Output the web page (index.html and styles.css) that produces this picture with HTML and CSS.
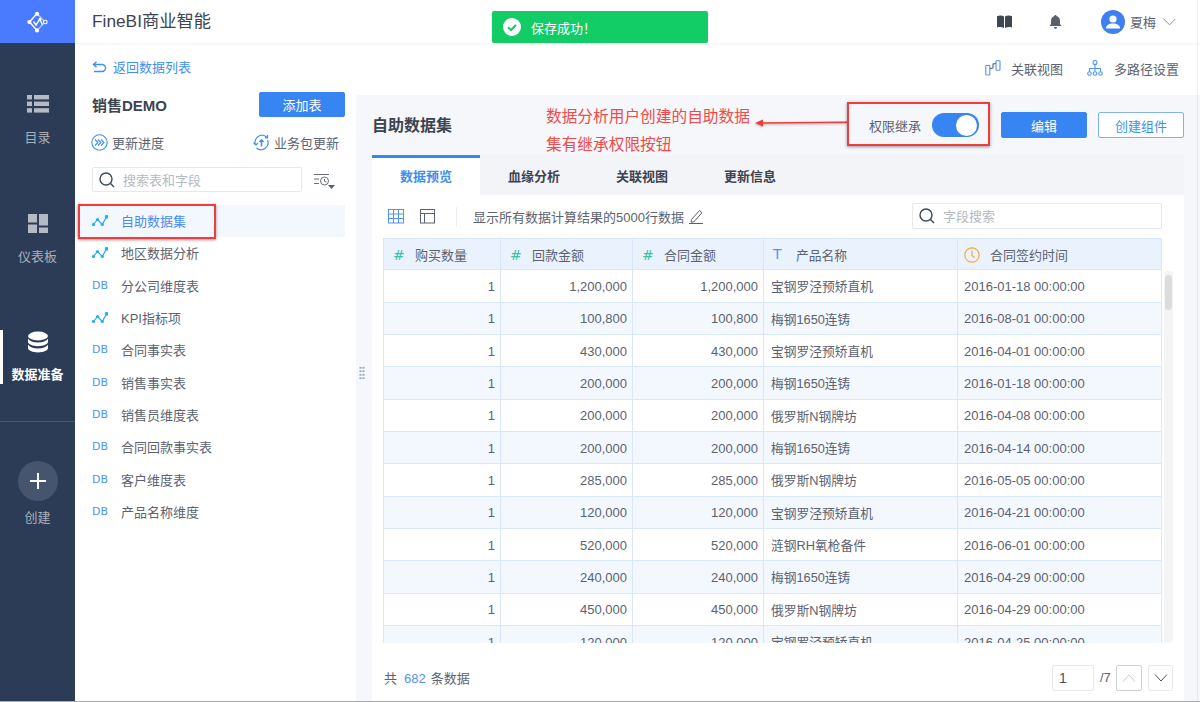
FILE: index.html
```html
<!DOCTYPE html>
<html lang="zh-CN">
<head>
<meta charset="utf-8">
<title>FineBI商业智能</title>
<link rel="stylesheet" href="styles.css">
</head>
<body>
<div class="app">
  <nav class="rail">
    <div class="rail-logo">
      <svg width="22" height="22" viewBox="0 0 22 22" fill="none" stroke="#fff" stroke-width="1.400">
        <path d="M10 2.500 2.500 11l7.500 8.500"/>
        <path d="M10 2.500l8 8.500-8 8.500" stroke-opacity=".55"/>
        <path d="M6.500 10.500 9 14l4-6 2.500 6"/>
        <circle cx="10" cy="2.800" r="2.100" fill="#fff" stroke="none"/>
        <circle cx="2.400" cy="11" r="2.100" fill="#fff" stroke="none"/>
        <circle cx="10" cy="19.400" r="2.100" fill="#fff" stroke="none"/>
        <circle cx="18.300" cy="11" r="1.800" fill="#4a7bff" stroke-width="1.100"/>
        <circle cx="13" cy="8" r="1.300" fill="#fff" stroke="none"/>
      </svg>
    </div>
    <a class="rail-item">
      <svg class="rail-icon" width="22" height="20" viewBox="0 0 22 20" fill="#b4bac4"><rect x="0" y="1" width="5" height="4.400"/><rect x="7" y="1" width="15" height="4.400"/><rect x="0" y="7.600" width="5" height="4.400"/><rect x="7" y="7.600" width="15" height="4.400"/><rect x="0" y="14.200" width="5" height="4.400"/><rect x="7" y="14.200" width="15" height="4.400"/></svg>
      <span>目录</span>
    </a>
    <a class="rail-item">
      <svg class="rail-icon" width="22" height="22" viewBox="0 0 22 22" fill="#b4bac4"><rect x="1" y="1" width="9" height="8.500"/><rect x="12" y="1" width="9" height="11.500"/><rect x="1" y="11.500" width="9" height="8.500"/><rect x="12" y="14.500" width="9" height="5.500"/></svg>
      <span>仪表板</span>
    </a>
    <a class="rail-item active">
      <svg class="rail-icon" width="22" height="22" viewBox="0 0 22 22" fill="#fff"><ellipse cx="11" cy="5" rx="10" ry="4.400"/><path d="M1 7.800c1.600 2.400 5.400 3.600 10 3.600s8.400-1.200 10-3.600v3c0 2.400-4.500 4.400-10 4.400S1 13.200 1 10.800z"/><path d="M1 13.800c1.600 2.400 5.400 3.600 10 3.600s8.400-1.200 10-3.600v3.200c0 2.400-4.500 4.400-10 4.400S1 19.400 1 17z"/></svg>
      <span>数据准备</span>
    </a>
    <div class="rail-divider"></div>
    <a class="rail-create">
      <i class="plus-circle"><svg width="16" height="16" viewBox="0 0 16 16" fill="#fff"><rect x="0" y="7" width="16" height="2"/><rect x="7" y="0" width="2" height="16"/></svg></i>
      <span>创建</span>
    </a>
  </nav>

  <div class="main">
    <header class="topbar">
      <div class="brand">FineBI商业智能</div>
      <div class="toast">
        <svg width="18" height="18" viewBox="0 0 18 18"><circle cx="9" cy="9" r="9" fill="#fff"/><path d="M5 9.200 8 12l5-5" fill="none" stroke="#12cd65" stroke-width="2"/></svg>
        <span>保存成功！</span>
      </div>
      <div class="top-tools">
        <svg class="book" width="15" height="13" viewBox="0 0 15 13" fill="#3f4650"><path d="M0 1.200C2.500 0 5.200.2 7 1.400V13C5 11.800 2.500 11.600 0 12.400zM15 1.200C12.500 0 9.800.2 8 1.400V13c2-1.200 4.500-1.400 7-.6z"/></svg>
        <svg class="bell" width="13" height="14" viewBox="0 0 13 14" fill="#5b6068"><path d="M6.500 0c.7 0 1 .5 1 1 2.300.6 3.500 2.500 3.500 5v3l1.500 2H.5L2 9V6c0-2.500 1.200-4.400 3.500-5 0-.5.300-1 1-1z"/><path d="M5 12h3c0 1-.6 1.800-1.500 1.800S5 13 5 12z"/></svg>
        <div class="avatar"><svg width="14" height="14" viewBox="0 0 14 14" fill="#fff"><circle cx="7" cy="4" r="3.600"/><path d="M0 13.500c0-3.500 3-5 7-5s7 1.500 7 5z"/></svg></div>
        <span class="user">夏梅</span>
        <svg class="chev" width="13" height="8" viewBox="0 0 13 8" fill="none" stroke="#8a8f98"><path d="M.5.800 6.500 6.800 12.500.8"/></svg>
      </div>
    </header>

    <div class="body">
      <aside class="panel">
        <a class="back">
          <svg width="15" height="12" viewBox="0 0 15 12" fill="none" stroke="#3f8ff0" stroke-width="1.400"><path d="M1.500 3.500H10a3.500 3.500 0 0 1 0 7H2M4.500.8 1.500 3.500l3 2.700"/></svg>
          返回数据列表
        </a>
        <div class="pkg">
          <b>销售DEMO</b>
          <button class="btn primary">添加表</button>
        </div>
        <div class="actions">
          <span class="act">
            <svg width="17" height="17" viewBox="0 0 17 17" fill="none" stroke="#3f8ff0" stroke-width="1.100"><circle cx="8.500" cy="8.500" r="7.700"/><path d="M4 5.500l3 3-3 3M7 5.500l3 3-3 3M10 5.500l3 3-3 3"/></svg>
            更新进度
          </span>
          <span class="act">
            <svg width="17" height="17" viewBox="0 0 17 17" fill="none" stroke="#3f8ff0" stroke-width="1.200"><path d="M2.500 11A7 7 0 0 1 14 3.500M14.500 6A7 7 0 0 1 3.500 14"/><path d="M.5 8.500 3 11l2-2M12 3.800h2.500V1" /><path d="M8.500 12.500V6" stroke-width="1.600"/><path d="M5.500 8 8.500 4.800 11.500 8z" fill="#3f8ff0" stroke="none"/></svg>
            业务包更新
          </span>
        </div>
        <div class="search-row">
          <label class="search">
            <svg class="mag" width="16" height="16" viewBox="0 0 16 16" fill="none" stroke="#3d4a5a" stroke-width="1.400"><circle cx="7" cy="7" r="6"/><path d="m11.500 11.500 3.500 3.500"/></svg>
            <span class="ph">搜索表和字段</span>
          </label>
          <svg class="filter" width="22" height="20" viewBox="0 0 22 20" fill="none" stroke="#6a6f78"><path d="M1 3.500h15M1 8h5M1 12.500h5"/><circle cx="11.500" cy="10" r="4"/><path d="M11.500 8v2.300l2 .8"/><path d="M15 14h7l-3.500 4z" fill="#5b6068" stroke="none"/></svg>
        </div>
        <ul class="list">
          <li class="row sel"><svg class="i-line" viewBox="0 0 16 12"><path d="M1.500 9.500 5.500 4.500l4.800 5 4.400-8"/><circle cx="1.500" cy="9.500" r="1.600"/><circle cx="5.500" cy="4.500" r="1.600"/><circle cx="10.300" cy="9.500" r="1.600"/><circle cx="14.700" cy="1.800" r="1.900"/></svg><span>自助数据集</span></li>
          <li class="row"><svg class="i-line" viewBox="0 0 16 12"><path d="M1.500 9.500 5.500 4.500l4.800 5 4.400-8"/><circle cx="1.500" cy="9.500" r="1.600"/><circle cx="5.500" cy="4.500" r="1.600"/><circle cx="10.300" cy="9.500" r="1.600"/><circle cx="14.700" cy="1.800" r="1.900"/></svg><span>地区数据分析</span></li>
          <li class="row"><em class="db">DB</em><span>分公司维度表</span></li>
          <li class="row"><svg class="i-line" viewBox="0 0 16 12"><path d="M1.500 9.500 5.500 4.500l4.800 5 4.400-8"/><circle cx="1.500" cy="9.500" r="1.600"/><circle cx="5.500" cy="4.500" r="1.600"/><circle cx="10.300" cy="9.500" r="1.600"/><circle cx="14.700" cy="1.800" r="1.900"/></svg><span>KPI指标项</span></li>
          <li class="row"><em class="db">DB</em><span>合同事实表</span></li>
          <li class="row"><em class="db">DB</em><span>销售事实表</span></li>
          <li class="row"><em class="db">DB</em><span>销售员维度表</span></li>
          <li class="row"><em class="db">DB</em><span>合同回款事实表</span></li>
          <li class="row"><em class="db">DB</em><span>客户维度表</span></li>
          <li class="row"><em class="db">DB</em><span>产品名称维度</span></li>
        </ul>
      </aside>

      <section class="detail">
        <div class="handle"></div>
        <div class="strip">
          <span class="strip-item">
            <svg width="16" height="16" viewBox="0 0 16 16" fill="none" stroke="#4f94f8" stroke-width="1.100"><rect x=".8" y="5.500" width="4" height="9.500" rx=".8"/><rect x="11" y=".8" width="4" height="9.500" rx=".8"/><path d="M5 8.500 8 8V4l3-.5" stroke="#5c6370"/></svg>
            关联视图
          </span>
          <span class="strip-item">
            <svg width="16" height="16" viewBox="0 0 16 16" fill="none" stroke="#4f94f8" stroke-width="1.100"><circle cx="8" cy="2.500" r="2"/><circle cx="2.500" cy="13.500" r="1.800"/><circle cx="8" cy="13.500" r="1.800"/><circle cx="13.500" cy="13.500" r="1.800"/><path d="M8 4.500v7M2.500 11.500V8.500h11v3"/></svg>
            多路径设置
          </span>
        </div>
        <div class="head">
          <h1>自助数据集</h1>
          <div class="note">数据分析用户创建的自助数据<br>集有继承权限按钮</div>
          <svg class="note-arrow" width="92" height="8" viewBox="0 0 92 8"><path d="M7 4 92 3.200" stroke="#ee3b3b" stroke-width="1.500"/><path d="M0 4l8-3.500v7z" fill="#ee3b3b"/></svg>
          <div class="head-actions">
            <span class="perm">权限继承</span>
            <span class="switch"><i></i></span>
            <button class="btn primary">编辑</button>
            <button class="btn ghost">创建组件</button>
          </div>
        </div>
        <div class="tabs">
          <a class="tab on">数据预览</a>
          <a class="tab">血缘分析</a>
          <a class="tab">关联视图</a>
          <a class="tab">更新信息</a>
        </div>
        <div class="content">
          <div class="toolbar">
            <svg class="tool" width="16" height="15" viewBox="0 0 16 15" fill="none" stroke="#4f94f8"><rect x=".5" y=".5" width="15" height="13.500"/><path d="M.5 5h15M.5 9.500h15M5.500.5V14M10.500.5V14"/></svg>
            <svg class="tool second" width="16" height="15" viewBox="0 0 16 15" fill="none" stroke="#5a6170"><rect x=".5" y=".5" width="14" height="13.500"/><path d="M.5 4.500h14M4.500 4.500V14"/></svg>
            <i class="sep"></i>
            <span class="info">显示所有数据计算结果的5000行数据</span>
            <svg class="pencil" width="15" height="15" viewBox="0 0 15 15" fill="none" stroke="#5a6170"><path d="M2.500 10.500 10.500 1.500l2.500 2.200-8 9-3 .5zM0 14.500h14"/></svg>
            <label class="search field">
              <svg class="mag" width="16" height="16" viewBox="0 0 16 16" fill="none" stroke="#3d4a5a" stroke-width="1.400"><circle cx="7" cy="7" r="6"/><path d="m11.500 11.500 3.500 3.500"/></svg>
              <span class="ph">字段搜索</span>
            </label>
          </div>
          <div class="grid-wrap">
            <div class="grid">
              <div class="tr th">
                <div class="td"><i class="num">#</i>购买数量</div>
                <div class="td"><i class="num">#</i>回款金额</div>
                <div class="td"><i class="num">#</i>合同金额</div>
                <div class="td"><i class="txt">T</i>产品名称</div>
                <div class="td"><svg class="clock" width="16" height="16" viewBox="0 0 16 16" fill="none" stroke="#f5a93a" stroke-width="1.200"><circle cx="8" cy="8" r="7.200"/><path d="M8 3.800V8.500l2.500 2"/></svg>合同签约时间</div>
              </div>
              <div class="tr"><div class="td r">1</div><div class="td r">1,200,000</div><div class="td r">1,200,000</div><div class="td">宝钢罗泾预矫直机</div><div class="td">2016-01-18 00:00:00</div></div>
              <div class="tr"><div class="td r">1</div><div class="td r">100,800</div><div class="td r">100,800</div><div class="td">梅钢1650连铸</div><div class="td">2016-08-01 00:00:00</div></div>
              <div class="tr"><div class="td r">1</div><div class="td r">430,000</div><div class="td r">430,000</div><div class="td">宝钢罗泾预矫直机</div><div class="td">2016-04-01 00:00:00</div></div>
              <div class="tr"><div class="td r">1</div><div class="td r">200,000</div><div class="td r">200,000</div><div class="td">梅钢1650连铸</div><div class="td">2016-01-18 00:00:00</div></div>
              <div class="tr"><div class="td r">1</div><div class="td r">200,000</div><div class="td r">200,000</div><div class="td">俄罗斯N钢牌坊</div><div class="td">2016-04-08 00:00:00</div></div>
              <div class="tr"><div class="td r">1</div><div class="td r">200,000</div><div class="td r">200,000</div><div class="td">梅钢1650连铸</div><div class="td">2016-04-14 00:00:00</div></div>
              <div class="tr"><div class="td r">1</div><div class="td r">285,000</div><div class="td r">285,000</div><div class="td">俄罗斯N钢牌坊</div><div class="td">2016-05-05 00:00:00</div></div>
              <div class="tr"><div class="td r">1</div><div class="td r">120,000</div><div class="td r">120,000</div><div class="td">宝钢罗泾预矫直机</div><div class="td">2016-04-21 00:00:00</div></div>
              <div class="tr"><div class="td r">1</div><div class="td r">520,000</div><div class="td r">520,000</div><div class="td">涟钢RH氧枪备件</div><div class="td">2016-06-01 00:00:00</div></div>
              <div class="tr"><div class="td r">1</div><div class="td r">240,000</div><div class="td r">240,000</div><div class="td">梅钢1650连铸</div><div class="td">2016-04-29 00:00:00</div></div>
              <div class="tr"><div class="td r">1</div><div class="td r">450,000</div><div class="td r">450,000</div><div class="td">俄罗斯N钢牌坊</div><div class="td">2016-04-29 00:00:00</div></div>
              <div class="tr"><div class="td r">1</div><div class="td r">120,000</div><div class="td r">120,000</div><div class="td">宝钢罗泾预矫直机</div><div class="td">2016-04-25 00:00:00</div></div>
            </div>
            <div class="scroll"><i></i></div>
          </div>
          <div class="foot">
            <span>共<b class="count">682</b>条数据</span>
            <div class="pager">
              <span class="page-input">1</span>
              <span class="page-total">/7</span>
              <span class="page-btn dim"><svg width="14" height="8" viewBox="0 0 14 8" fill="none" stroke="#c5cad2"><path d="M1 7.500 7 1l6 6.500"/></svg></span>
              <span class="page-btn"><svg width="14" height="8" viewBox="0 0 14 8" fill="none" stroke="#4a5260"><path d="M1 .5 7 7l6-6.500"/></svg></span>
            </div>
          </div>
        </div>
      </section>
    </div>
  </div>

  <div class="mark mark-list"></div>
  <div class="mark mark-perm"></div>
</div>
</body>
</html>
```

FILE: styles.css
```css
* { box-sizing: border-box; }
html, body { margin: 0; height: 100%; overflow: hidden; }
body {
  font-family: "Liberation Sans", "Noto Sans CJK SC", sans-serif;
  font-size: 13px;
  color: #5c6370;
  background: #fff;
}
a { color: inherit; text-decoration: none; }
i, em { font-style: normal; }
button { font: inherit; cursor: pointer; }

.app {
  position: relative;
  display: flex;
  width: 1200px;
  height: 702px;
  border-bottom: 1px solid #aaa;
}
.app::after {
  content: "";
  position: absolute;
  top: 0; bottom: 0; right: 2px;
  width: 1px;
  background: rgba(0,0,0,.05);
  z-index: 3;
}

/* left rail */
.rail {
  flex: 0 0 75px;
  background: #2c3c56;
  color: #a9b0bb;
  display: flex;
  flex-direction: column;
  align-items: stretch;
}
.rail-logo {
  height: 43px;
  background: #4a7bff;
  display: flex;
  align-items: center;
  justify-content: center;
}
.rail-item {
  position: relative;
  height: 54px;
  margin-top: 64.500px;
  padding-top: 1px;
  display: flex;
  flex-direction: column;
  align-items: center;
  text-align: center;
}
.rail-logo + .rail-item { margin-top: 50px; }
.rail-icon { flex: none; }
.rail-item span { position: absolute; left: 0; right: 0; top: 36px; line-height: 18px; }
.rail-item.active { color: #fff; font-weight: bold; }
.rail-item.active::before {
  content: "";
  position: absolute;
  left: 0; top: 0; bottom: 0;
  width: 3px;
  background: #fff;
}
.rail-divider { height: 1px; background: #4a586e; margin-top: 37px; }
.rail-create {
  margin-top: 39px;
  display: flex;
  flex-direction: column;
  align-items: center;
  gap: 8px;
  line-height: 18px;
}
.plus-circle {
  width: 40px; height: 40px;
  border-radius: 50%;
  background: #46556d;
  display: flex; align-items: center; justify-content: center;
}

/* main */
.main { flex: 1; min-width: 0; display: flex; flex-direction: column; }
.topbar {
  position: relative;
  z-index: 2;
  flex: 0 0 43px;
  background: #fff;
  display: flex;
  align-items: center;
  padding-left: 17px;
  box-shadow: 0 1px 3px rgba(0,0,0,.05);
}
.brand { font-size: 17.300px; color: #3d4450; line-height: 43px; }
.toast {
  position: absolute;
  left: 417px; top: 11px;
  width: 216px; height: 32px;
  background: #12cd65;
  border-radius: 2px;
  color: #fff;
  display: flex;
  align-items: center;
  gap: 10px;
  padding-left: 11px;
}
.top-tools {
  margin-left: auto;
  display: flex;
  align-items: center;
  padding-right: 24px;
  height: 43px;
}
.book { margin-right: 37px; }
.bell { margin-right: 39px; }
.avatar {
  width: 24px; height: 24px;
  border-radius: 50%;
  background: #3f7ff0;
  display: flex; align-items: center; justify-content: center;
}
.user { margin-left: 5px; margin-right: 7px; }

.body { flex: 1; min-height: 0; display: flex; }

/* data list panel */
.panel { flex: 0 0 281px; background: #fff; display: flex; flex-direction: column; }
.back {
  height: 47px;
  padding-left: 17px;
  display: flex;
  align-items: center;
  gap: 6px;
  color: #3f8ff0;
}
.pkg {
  margin: 2px 11px 0 17px;
  height: 25px;
  display: flex;
  align-items: center;
  justify-content: space-between;
}
.pkg b { font-size: 15px; color: #3d4450; }
.btn {
  width: 86px;
  height: 26px;
  border-radius: 2px;
  border: 1px solid #3685f2;
  padding: 0;
}
.btn.primary { background: #3685f2; color: #fff; }
.btn.ghost { background: #fff; color: #3f8ff0; border: 1.500px solid #7fb2f6; margin-left: 11px; }
.pkg .btn { height: 25px; }
.actions {
  margin: 12px 17px 0 16px;
  height: 26px;
  display: flex;
  align-items: center;
  justify-content: space-between;
}
.act { display: flex; align-items: center; gap: 4px; }
.search-row {
  margin: 12px 11px 0 17px;
  height: 25px;
  display: flex;
  align-items: center;
  justify-content: space-between;
}
.search {
  width: 210px;
  height: 25px;
  border: 1px solid #e6e8ec;
  border-radius: 2px;
  background: #fff;
  display: flex;
  align-items: center;
  padding-left: 6px;
  gap: 8px;
}
.ph { color: #b5b9c0; }
.filter { margin-right: 10px; margin-top: 3px; }
.list { list-style: none; margin: 13px 11px 0 0; padding: 0; }
.row {
  height: 32.330px;
  display: flex;
  align-items: center;
  padding-left: 17px;
}
.row.sel { background: #f3f8fe; color: #4a8cf0; }
.row span { margin: 0 0 1.500px 13px; }
.i-line { width: 16px; height: 12px; fill: #1fb0f5; stroke: none; flex: none; }
.i-line path { fill: none; stroke: #1e9ff5; stroke-width: 1.100; }
.db {
  width: 16px;
  font-family: "DejaVu Sans", sans-serif;
  font-size: 11px;
  color: #4f94f8;
  line-height: 12px;
  flex: none;
}

/* detail */
.detail {
  position: relative;
  flex: 1;
  min-width: 0;
  background: #f6f7fa;
  display: flex;
  flex-direction: column;
}
.handle {
  position: absolute;
  left: 3px; top: 323px;
  width: 6px; height: 14px;
  background-image: radial-gradient(circle, #93a5bc 1px, transparent 1.200px);
  background-size: 3px 3.500px;
}
.strip {
  flex: 0 0 52px;
  background: #fff;
  display: flex;
  justify-content: flex-end;
  align-items: center;
  padding-right: 21px;
  padding-bottom: 2px;
  gap: 24px;
}
.strip-item { display: flex; align-items: center; gap: 10px; }
.strip-item:last-child { gap: 11px; }
.head {
  position: relative;
  flex: 0 0 60px;
  margin: 0 16px;
  display: flex;
  align-items: center;
}
.head h1 { margin: -2px 0 0; font-size: 16px; color: #3d4450; font-weight: bold; }
.note {
  position: absolute;
  left: 174px; top: 8px;
  font-size: 15.700px;
  line-height: 28px;
  color: #f04a4a;
}
.note-arrow { position: absolute; left: 383px; top: 24px; filter: drop-shadow(0 1px 1px rgba(0,0,0,.3)); }
.head-actions { margin-left: auto; display: flex; align-items: center; }
.perm { margin-right: 11px; }
.switch {
  width: 47px; height: 24px;
  border-radius: 12px;
  background: #3685f2;
  margin-right: 22px;
  display: flex;
  align-items: center;
  justify-content: flex-end;
  padding-right: 2px;
}
.switch i { width: 21px; height: 21px; border-radius: 50%; background: #fff; }

.tabs { flex: 0 0 40px; margin: 0 16px; background: #f3f4f8; display: flex; }
.tab {
  width: 108px;
  height: 40px;
  line-height: 44px;
  overflow: hidden;
  text-align: center;
  font-weight: bold;
  color: #3d4450;
}
.tab.on { background: #fff; color: #3f8ff0; border-top: 3px solid #3685f2; line-height: 38px; }

.content {
  flex: 1;
  min-height: 0;
  margin: 0 16px;
  background: #fff;
  padding-left: 11px;
  padding-right: 11px;
  display: flex;
  flex-direction: column;
}
.toolbar {
  flex: 0 0 43px;
  display: flex;
  align-items: center;
  padding-left: 5px;
}
.tool.second { margin-left: 16px; }
.sep { width: 1px; height: 20px; background: #eceef2; margin: 0 16px 0 20px; }
.info { margin-right: 5px; }
.field {
  margin-left: auto;
  margin-right: 11px;
  margin-bottom: 2px;
  width: 250px;
  height: 26px;
  padding-left: 6px;
}

.grid-wrap { flex: 0 0 405px; display: flex; overflow: hidden; }
.grid { flex: 0 0 779px; }
.tr {
  display: grid;
  grid-template-columns: 117px 132px 131px 194px 204px;
  height: 32.330px;
  border-left: 1px solid #d8e7fb;
}
.tr:nth-child(odd) { background: #f3f8fe; }
.tr.th { background: #e9f2fd; border-top: 1px solid #d8e7fb; }
.td {
  display: flex;
  align-items: center;
  padding: 1px 6px 0;
  border-right: 1px solid #d8e7fb;
  border-bottom: 1px solid #d8e7fb;
  color: #5c6370;
  white-space: nowrap;
}
.td:nth-child(4) { font-size: 12.750px; padding-top: 0; padding-left: 7px; }
.td.r { justify-content: flex-end; padding-right: 5px; }
.num, .txt {
  flex: none;
  width: 22px;
  margin-left: 3px;
  font-family: "DejaVu Sans", sans-serif;
  font-size: 14px;
  color: #3ebfa8;
}
.txt { color: #4f94f8; width: 23px; margin-left: 2px; }
.clock { margin-right: 10px; }
.scroll {
  flex: 0 0 9px;
  margin: 33px 0 0 2px;
  background: #f3f4f6;
  border-radius: 4px;
  padding: 4px 1px 0;
}
.scroll i { display: block; height: 35px; background: #dcdcdc; border-radius: 4px; }

.foot {
  flex: 1;
  display: flex;
  align-items: center;
  justify-content: space-between;
  padding-left: 1px;
  padding-top: 11px;
}
.count { font-weight: normal; color: #4f94f8; margin: 0 5px 0 7px; }
.pager { display: flex; align-items: center; }
.page-input, .page-btn {
  height: 26px;
  border: 1px solid #e6e8ec;
  border-radius: 2px;
  display: flex;
  align-items: center;
}
.page-input { width: 42px; padding-left: 6px; color: #4a5260; font-size: 14px; }
.page-total { margin: 0 6px; width: 10px; }
.page-btn { width: 26px; justify-content: center; }
.page-btn:last-child { width: 25px; }
.page-btn.dim { border-color: #cfd3d9; margin-right: 6px; }

/* red annotation frames over the screenshot */
.mark {
  position: absolute;
  border: 2.500px solid #f03c3c;
  box-shadow: 0 1px 3px rgba(0,0,0,.4);
  pointer-events: none;
  z-index: 3;
}
.mark-list { left: 78px; top: 204px; width: 138px; height: 35px; }
.mark-perm { left: 847px; top: 102px; width: 143px; height: 44px; }
```
